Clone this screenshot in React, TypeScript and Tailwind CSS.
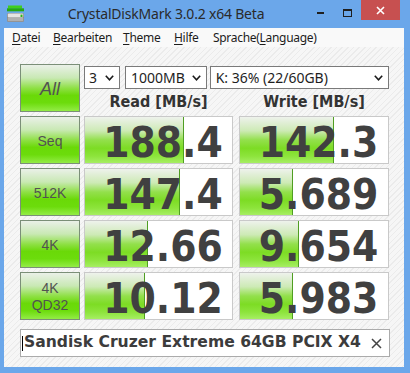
const rows = [
  { label: ['Seq'], read: '188.4', readBar: 99, write: '142.3', writeBar: 94 },
  { label: ['512K'], read: '147.4', readBar: 95, write: '5.689', writeBar: 53 },
  { label: ['4K'], read: '12.66', readBar: 63, write: '9.654', writeBar: 59 },
  { label: ['4K', 'QD32'], read: '10.12', readBar: 60, write: '5.983', writeBar: 53 },
];

const menu = [
  { key: 'D', rest: 'atei', w: 'w-[41px]' },
  { key: 'B', rest: 'earbeiten', w: 'w-[70px]' },
  { key: 'T', rest: 'heme', w: 'w-[51px]' },
  { key: 'H', rest: 'ilfe', w: 'w-[39px]' },
];

function Chevron() {
  return (
    <svg width="9" height="6" viewBox="0 0 9 6" className="shrink-0">
      <polyline points="0.8,0.8 4.5,4.8 8.2,0.8" fill="none" stroke="#1a1a1a" strokeWidth="1.6" />
    </svg>
  );
}

function AppIcon() {
  return (
    <svg width="18" height="18" viewBox="0 0 18 18" className="ml-[7px] mt-[5px] shrink-0">
      <rect x="1" y="0.5" width="14" height="3" fill="#3fcf1f" />
      <rect x="0" y="3.3" width="17" height="3" fill="#25a812" />
      <rect x="0" y="8" width="17" height="9" rx="1.5" fill="#8c8c8c" />
      <rect x="0.8" y="8.6" width="15.4" height="4" rx="1" fill="#e4e4e4" />
      <rect x="0.8" y="12.6" width="15.4" height="3.6" fill="#b0b0b0" />
      <rect x="13.5" y="9.6" width="2" height="2.4" fill="#2bb51a" />
    </svg>
  );
}

function TestButton({ children, className = '' }: { children: React.ReactNode; className?: string }) {
  return (
    <div
      className={`flex h-[48px] w-[60px] shrink-0 flex-col items-center justify-center border border-[#7b8f78] bg-[linear-gradient(to_bottom,#eaf0e8_0%,#c9e9b4_28%,#8fe046_50%,#6ad908_66%,#6cdc0c_82%,#93ec46_100%)] pt-[2px] font-['Liberation_Sans',sans-serif] leading-[15px] text-[#525252] ${className}`}
    >
      {children}
    </div>
  );
}

function ScoreCell({ value, bar, className }: { value: string; bar: number; className: string }) {
  return (
    <div className={`relative flex h-[48px] shrink-0 items-center justify-center border border-[#c9c9c9] bg-white pl-[9px] pt-[5px] ${className}`}>
      <div
        className="absolute bottom-0 left-0 top-0 border-r border-[#4f9e22] bg-[linear-gradient(to_bottom,#eef2ec_0%,#cdeab5_30%,#93e04c_50%,#7ddc24_68%,#8de43c_85%,#a6ee62_100%)]"
        style={{ width: bar }}
      />
      <span className="relative font-['DejaVu_Sans_Condensed','DejaVu_Sans',sans-serif] text-[42px] font-bold leading-none text-[#404040]">
        {value}
      </span>
    </div>
  );
}

export default function App() {
  return (
    <div className="flex h-[373px] w-[410px] flex-col overflow-hidden bg-[#6ba7ea] font-['Noto_Sans',sans-serif]">
      {/* title bar */}
      <div className="flex h-[28px] shrink-0 items-start">
        <AppIcon />
        <div className="flex-1 text-center text-[14px] leading-[28px] tracking-[-0.2px] text-[#2a2a2a]">
          CrystalDiskMark 3.0.2 x64 Beta
        </div>
        <div className="mr-[10px] flex items-start">
          <div className="flex h-[20px] w-[27px] items-center justify-center pt-[6px]">
            <div className="h-[2px] w-[7px] bg-[#1f1f1f]" />
          </div>
          <div className="flex h-[20px] w-[27px] items-start justify-center pt-[9px]">
            <div className="h-[8px] w-[9px] border border-t-2 border-[#1f1f1f]" />
          </div>
          <div className="flex h-[20px] w-[39px] items-center justify-center bg-[#c75050]">
            <svg width="9" height="9" viewBox="0 0 9 9">
              <path d="M1 1 L8 8 M8 1 L1 8" stroke="#ffffff" strokeWidth="1.6" />
            </svg>
          </div>
        </div>
      </div>

      <div className="flex flex-1 flex-col pb-[6px] pl-[4px] pr-[6px]">
        {/* menu bar */}
        <div className="flex h-[19px] shrink-0 items-center bg-[#f9f9f9] pl-[8px] text-[12px] tracking-[-0.3px] text-[#1c1c1c]">
          {menu.map((m) => (
            <div key={m.key} className={m.w}>
              <span className="underline underline-offset-[2px]">{m.key}</span>
              {m.rest}
            </div>
          ))}
          <div>
            Sprache(<span className="underline underline-offset-[2px]">L</span>anguage)
          </div>
        </div>

        {/* client area */}
        <div className="flex flex-1 flex-col bg-[repeating-linear-gradient(135deg,#f6f6f6_0px,#f6f6f6_3px,#ebebeb_3px,#ebebeb_4px)] pl-[16px] pt-[17px]">
          <div className="flex flex-col gap-[4px]">
            {/* header row */}
            <div className="flex h-[48px]">
              <TestButton className="text-[18px] italic">All</TestButton>
              <div className="ml-[4px] flex w-[305px] flex-col">
                <div className="mt-[2px] flex h-[23px] text-[14px] text-[#1e1e1e]">
                  <div className="flex w-[36px] items-center justify-between border border-[#7a7a7a] bg-white pl-[4px] pr-[5px]">
                    <span>3</span>
                    <Chevron />
                  </div>
                  <div className="ml-[5px] flex w-[82px] items-center justify-between border border-[#7a7a7a] bg-white pl-[5px] pr-[5px]">
                    <span>1000MB</span>
                    <Chevron />
                  </div>
                  <div className="ml-[3px] flex w-[180px] items-center justify-between border border-[#7a7a7a] bg-white pl-[5px] pr-[5px]">
                    <span>K: 36% (22/60GB)</span>
                    <Chevron />
                  </div>
                </div>
                <div className="mt-[4px] grid grid-cols-[149px_150px] gap-x-[6px] font-['DejaVu_Sans_Condensed','DejaVu_Sans',sans-serif] text-[16px] font-bold leading-[18px] text-[#333333]">
                  <div className="text-center">Read [MB/s]</div>
                  <div className="text-center">Write [MB/s]</div>
                </div>
              </div>
            </div>

            {rows.map((r) => (
              <div key={r.label.join(' ')} className="flex h-[48px]">
                <TestButton className={r.label.length > 1 ? 'text-[14px] leading-[17px]' : 'text-[14px]'}>
                  {r.label.map((l) => (
                    <span key={l}>{l}</span>
                  ))}
                </TestButton>
                <ScoreCell value={r.read} bar={r.readBar} className="ml-[4px] w-[149px]" />
                <ScoreCell value={r.write} bar={r.writeBar} className="ml-[6px] w-[150px]" />
              </div>
            ))}
          </div>

          {/* comment */}
          <div className="mt-[9px] flex h-[28px] w-[370px] items-center border border-[#ababab] bg-white">
            <div className="ml-[1px] h-[15px] w-[1px] bg-black" />
            <div className="ml-[1px] flex-1 whitespace-nowrap font-['DejaVu_Sans',sans-serif] text-[15.6px] font-bold leading-none text-[#3c3c3c]">
              Sandisk Cruzer Extreme 64GB PCIX X4
            </div>
            <svg width="11" height="11" viewBox="0 0 11 11" className="mr-[7px] shrink-0">
              <path d="M1 1 L10 10 M10 1 L1 10" stroke="#444444" strokeWidth="1.5" />
            </svg>
          </div>
        </div>
      </div>
    </div>
  );
}
